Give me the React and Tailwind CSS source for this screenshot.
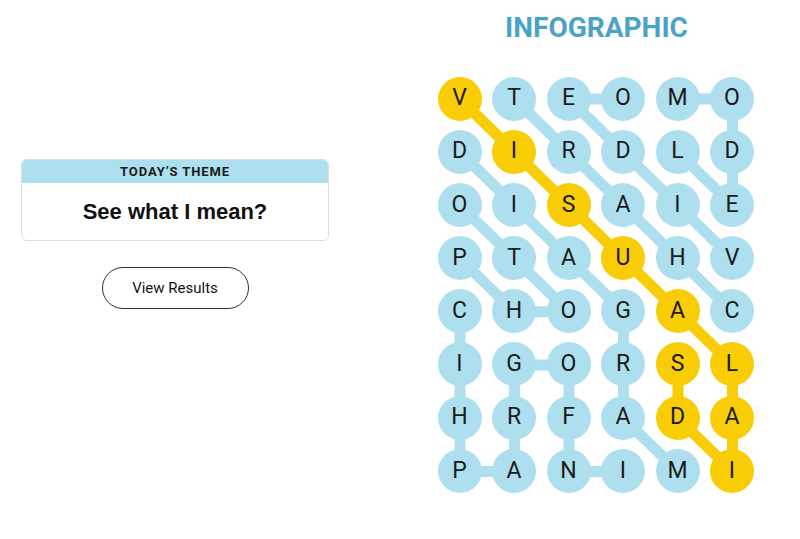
import React from "react";

const LETTERS = [
  "VTEOMO",
  "DIRDLD",
  "OISAIE",
  "PTAUHV",
  "CHOGAC",
  "IGORSL",
  "HRFADA",
  "PANIMI",
];

const YELLOW = [
  [0, 0], [1, 1], [2, 2], [3, 3], [4, 4], [5, 5], [6, 5], [7, 5], [6, 4], [5, 4],
];

const BLUE_WORDS = [
  [[3, 5], [2, 4], [1, 3], [0, 2], [0, 3]],
  [[0, 4], [0, 5], [1, 5], [2, 5], [1, 4]],
  [[4, 5], [3, 4], [2, 3], [1, 2], [0, 1]],
  [[3, 0], [4, 1], [4, 2], [3, 1], [2, 0]],
  [[1, 0], [2, 1], [3, 2], [4, 3], [5, 3], [6, 3], [7, 4]],
  [[7, 3], [7, 2], [6, 2], [5, 2], [5, 1], [6, 1], [7, 1], [7, 0], [6, 0], [5, 0], [4, 0]],
];

const PX = 54.5;
const PY = 53.2;
const R = 22;
const cx = (c) => R + c * PX;
const cy = (r) => R + r * PY;

const yellowSet = new Set(YELLOW.map(([r, c]) => `${r}-${c}`));

function Path({ cells, color }) {
  const pts = cells.map(([r, c]) => `${cx(c)},${cy(r)}`).join(" ");
  return (
    <polyline
      points={pts}
      fill="none"
      stroke={color}
      strokeWidth="11"
      strokeLinejoin="round"
      strokeLinecap="round"
    />
  );
}

export default function App() {
  return (
    <div
      className="w-[800px] h-[539px] bg-white flex overflow-hidden"
      style={{ fontFamily: "Roboto, 'Liberation Sans', sans-serif" }}
    >
      <div className="w-[350px] flex flex-col items-center pt-[159px]">
        <div className="w-[308px] border border-[#dcdcdc] rounded-[6px] overflow-hidden">
          <div className="h-[23px] bg-[#aedfee] flex items-center justify-center text-[13px] font-bold tracking-[0.9px] text-[#1a1a1a]">
            TODAY’S THEME
          </div>
          <div className="h-[57px] flex items-center justify-center text-[22px] font-bold text-[#111] font-['Liberation_Sans',sans-serif]">
            See what I mean?
          </div>
        </div>
        <div className="mt-[26px] w-[147px] h-[42px] rounded-full border border-[#333] flex items-center justify-center text-[15px] text-[#121212]">
          View Results
        </div>
      </div>
      <div className="ml-[87.5px] w-[318px] flex flex-col items-center pt-[11px]">
        <div className="h-[34px] leading-[34px] text-[28px] font-bold text-[#4aa3c4]">
          INFOGRAPHIC
        </div>
        <div className="mt-[31.5px] relative w-full">
          <svg
            className="absolute left-0 top-0"
            width="318"
            height="420"
            viewBox="0 0 318 420"
          >
            {BLUE_WORDS.map((w, i) => (
              <Path key={i} cells={w} color="#aedfee" />
            ))}
            <Path cells={YELLOW} color="#f8cd05" />
          </svg>
          <div className="relative grid grid-cols-[repeat(6,44px)] gap-x-[10.5px] gap-y-[9.2px]">
            {LETTERS.map((row, r) =>
              row.split("").map((ch, c) => (
                <div
                  key={`${r}-${c}`}
                  className={`w-[44px] h-[44px] rounded-full flex items-center justify-center text-[23px] text-[#1a1a1a] ${
                    yellowSet.has(`${r}-${c}`) ? "bg-[#f8cd05]" : "bg-[#aedfee]"
                  }`}
                >
                  {ch}
                </div>
              ))
            )}
          </div>
        </div>
      </div>
    </div>
  );
}
